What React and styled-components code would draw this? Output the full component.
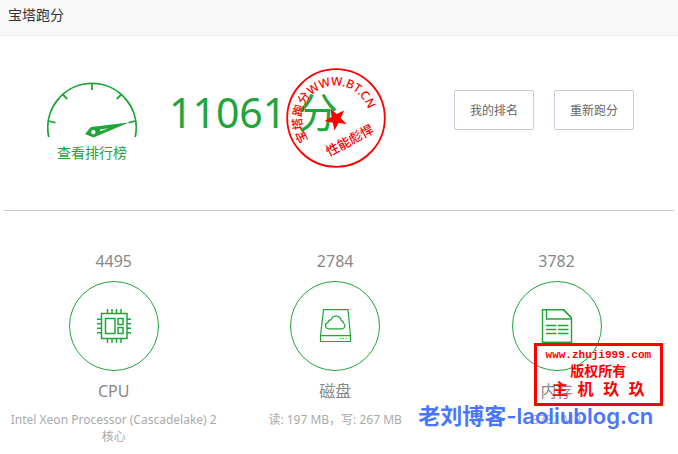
import React from "react";
import styled, { createGlobalStyle } from "styled-components";

const GREEN = "#20a53a";
const RED = "#ff0000";
const LINE = "#cbc9d9";

const GlobalStyle = createGlobalStyle`
  * {
    box-sizing: border-box;
  }
  body {
    margin: 0;
    background: #fff;
    font-family: "Noto Sans", "Noto Sans CJK SC", sans-serif;
    font-size: 12px;
    color: #666;
  }
`;

const Page = styled.div`
  overflow: hidden;
`;

const Header = styled.header`
  height: 36px;
  padding: 0 8px;
  background: #f8f8f8;
  border-bottom: 1px solid #eee;
`;

const Title = styled.h1`
  margin: 0;
  font-size: 14px;
  font-weight: 400;
  line-height: 30px;
  color: #333;
`;

const Body = styled.main`
  padding: 0 4px;
`;

const Summary = styled.section`
  display: flex;
  align-items: flex-start;
  padding: 46px 40px 47px 43px;
  border-bottom: 1px solid ${LINE};
`;

const RankLink = styled.a`
  display: flex;
  flex-direction: column;
  align-items: center;
  gap: 4px;
  width: 90px;
  font-size: 14px;
  line-height: 20px;
  color: ${GREEN};
  text-decoration: none;
`;

const Score = styled.div`
  position: relative;
  margin-left: 32px;
  font-size: 41px;
  line-height: 60px;
  white-space: nowrap;
  color: ${GREEN};
`;

const StampSvg = styled.svg`
  position: absolute;
  top: -14px;
  left: 117px;
  fill: ${RED};
  font-family: "Noto Sans", "Noto Sans CJK SC", sans-serif;
`;

const Actions = styled.div`
  display: flex;
  gap: 20px;
  margin: 8px 0 0 auto;
`;

const Button = styled.button`
  width: 80px;
  height: 40px;
  padding: 0;
  border: 1px solid ${LINE};
  border-radius: 2px;
  background: #fff;
  font-family: inherit;
  font-size: 12px;
  color: #666;
`;

const Stats = styled.section`
  display: flex;
  margin-left: -1px;
  padding-top: 38px;
`;

const Stat = styled.div`
  position: relative;
  display: flex;
  flex-direction: column;
  align-items: center;
  gap: 8px;
  width: 33%;
  padding: 0 5px;
  text-align: center;
`;

const StatText = styled.div`
  font-size: 16px;
  line-height: 24px;
  color: #888;
`;

const Circle = styled.div`
  display: flex;
  align-items: center;
  justify-content: center;
  width: 90px;
  height: 90px;
  border: 1px solid ${GREEN};
  border-radius: 50%;

  svg {
    fill: none;
    stroke: ${GREEN};
  }
`;

const Detail = styled.div`
  font-size: 12px;
  line-height: 17px;
  color: #aaa;
`;

const Copyright = styled.div`
  position: absolute;
  top: 94px;
  left: 88px;
  width: 129px;
  height: 63px;
  padding-top: 2px;
  border: 3px solid ${RED};
  font-family: "Liberation Mono", "Noto Sans CJK SC", monospace;
  font-weight: 700;
  white-space: nowrap;
  color: ${RED};
`;

const CopyrightLine = styled.div`
  font-size: ${props => props.$size}px;
  line-height: ${props => props.$size + 4}px;
`;

const BlogMark = styled.div`
  position: absolute;
  top: 152px;
  right: 14px;
  font-family: Inter, "Noto Sans CJK SC", sans-serif;
  font-size: 22px;
  font-weight: 600;
  line-height: 30px;
  white-space: nowrap;
  color: #4876ff;
`;

const Gauge = () => (
  <svg width="90" height="57" fill="none" stroke={GREEN} strokeWidth="1.8">
    <path d="M1.8 55A44.2 44.2 0 1 1 88.2 55" />
    <path d="M45 1v7M15.3 12l5 5M74.7 12l-5 5M1.5 39l7 1.7M88.5 39l-7 1.7" />
    <path
      d="M82 40.5L44 45 38 52 46.5 55.5zM46.3 48a2.2 2.2 0 1 0 .1 0zM53 47.5l.5 1.8 8-3z"
      fill={GREEN}
      fillRule="evenodd"
      stroke="none"
    />
  </svg>
);

const Stamp = () => (
  <StampSvg width="100" height="100" viewBox="0 0 100 100">
    <circle cx="50" cy="50" r="48.8" fill="none" stroke={RED} strokeWidth="1.8" />
    <path id="stampArc" d="M22.5 72A34 34 0 1 1 83 58" fill="none" />
    <text fontSize="12" fontWeight="500">
      <textPath href="#stampArc">宝塔跑分WWW.BT.CN</textPath>
    </text>
    <path d="M44.5 40.7L50.6 46 58 42.4 54.8 50.3 60.5 56 52.5 55 48.5 62.5 46.7 54.8 38.5 53 45.6 49z" />
    <text
      x="64"
      y="77"
      fontSize="13"
      fontWeight="500"
      textAnchor="middle"
      transform="rotate(-28 64 73)"
    >
      性能彪悍
    </text>
  </StampSvg>
);

const CpuIcon = () => (
  <svg width="34" height="34" strokeWidth="1.5">
    <rect x="4.5" y="4.5" width="25.5" height="25" />
    <rect x="8.5" y="9.5" width="9.5" height="15" />
    <rect x="21" y="9.5" width="5" height="6" />
    <rect x="21" y="18.5" width="5" height="6" />
    <path d="M10.5 0v4M15 0v4M19.5 0v4M24 0v4M10.5 30v4M15 30v4M19.5 30v4M24 30v4" />
    <path d="M0 10.2h4M0 14.7h4M0 19.3h4M0 23.8h4M30 10.2h4M30 14.7h4M30 19.3h4M30 23.8h4" />
  </svg>
);

const DiskIcon = () => (
  <svg width="34" height="34" strokeWidth="1.2">
    <path d="M5.5 .7h24.5l2.5 26v5.8h-30v-5.8zM2.5 26.7h30" />
    <path d="M11 19.8c-4.2 0-4.8-5.3-1-6.4.3-1.8 1.5-2.6 3-2.6 2-5.3 9.2-4.6 10.3.9 1.5.2 2.1 1.1 2.1 2.4 2.5 1.4 1.8 5.7-1.6 5.7z" />
    <path d="M22 29.5h1.2M24.7 29.5h1.2M27.4 29.5h1.2" />
  </svg>
);

const MemoryIcon = () => (
  <svg width="34" height="34" strokeWidth="1.4">
    <path d="M2.5 .7h21l8 8v24.5h-29z" />
    <path d="M6.5 .7v9.3h25M23.5 .7l8 8" />
    <path d="M6 16.5h10.5M18 16.5h10.5M6 20.5h10.5M18 20.5h10.5M6 24.5h10.5M18 24.5h10.5" />
  </svg>
);

const App = () => (
  <Page>
    <GlobalStyle />
    <Header>
      <Title>宝塔跑分</Title>
    </Header>
    <Body>
      <Summary>
        <RankLink href="#rank">
          <Gauge />
          查看排行榜
        </RankLink>
        <Score>
          11061 分
          <Stamp />
        </Score>
        <Actions>
          <Button type="button">我的排名</Button>
          <Button type="button">重新跑分</Button>
        </Actions>
      </Summary>
      <Stats>
        <Stat>
          <StatText>4495</StatText>
          <Circle>
            <CpuIcon />
          </Circle>
          <StatText>CPU</StatText>
          <Detail>Intel Xeon Processor (Cascadelake) 2 核心</Detail>
        </Stat>
        <Stat>
          <StatText>2784</StatText>
          <Circle>
            <DiskIcon />
          </Circle>
          <StatText>磁盘</StatText>
          <Detail>读: 197 MB，写: 267 MB</Detail>
        </Stat>
        <Stat>
          <StatText>3782</StatText>
          <Circle>
            <MemoryIcon />
          </Circle>
          <StatText>内存</StatText>
          <Detail>3782 MB</Detail>
          <Copyright>
            <CopyrightLine $size={11}>www.zhuji999.com</CopyrightLine>
            <CopyrightLine $size={14}>版权所有</CopyrightLine>
            <CopyrightLine $size={16}>主 机 玖 玖</CopyrightLine>
          </Copyright>
          <BlogMark>老刘博客-laoliublog.cn</BlogMark>
        </Stat>
      </Stats>
    </Body>
  </Page>
);

export default App;
